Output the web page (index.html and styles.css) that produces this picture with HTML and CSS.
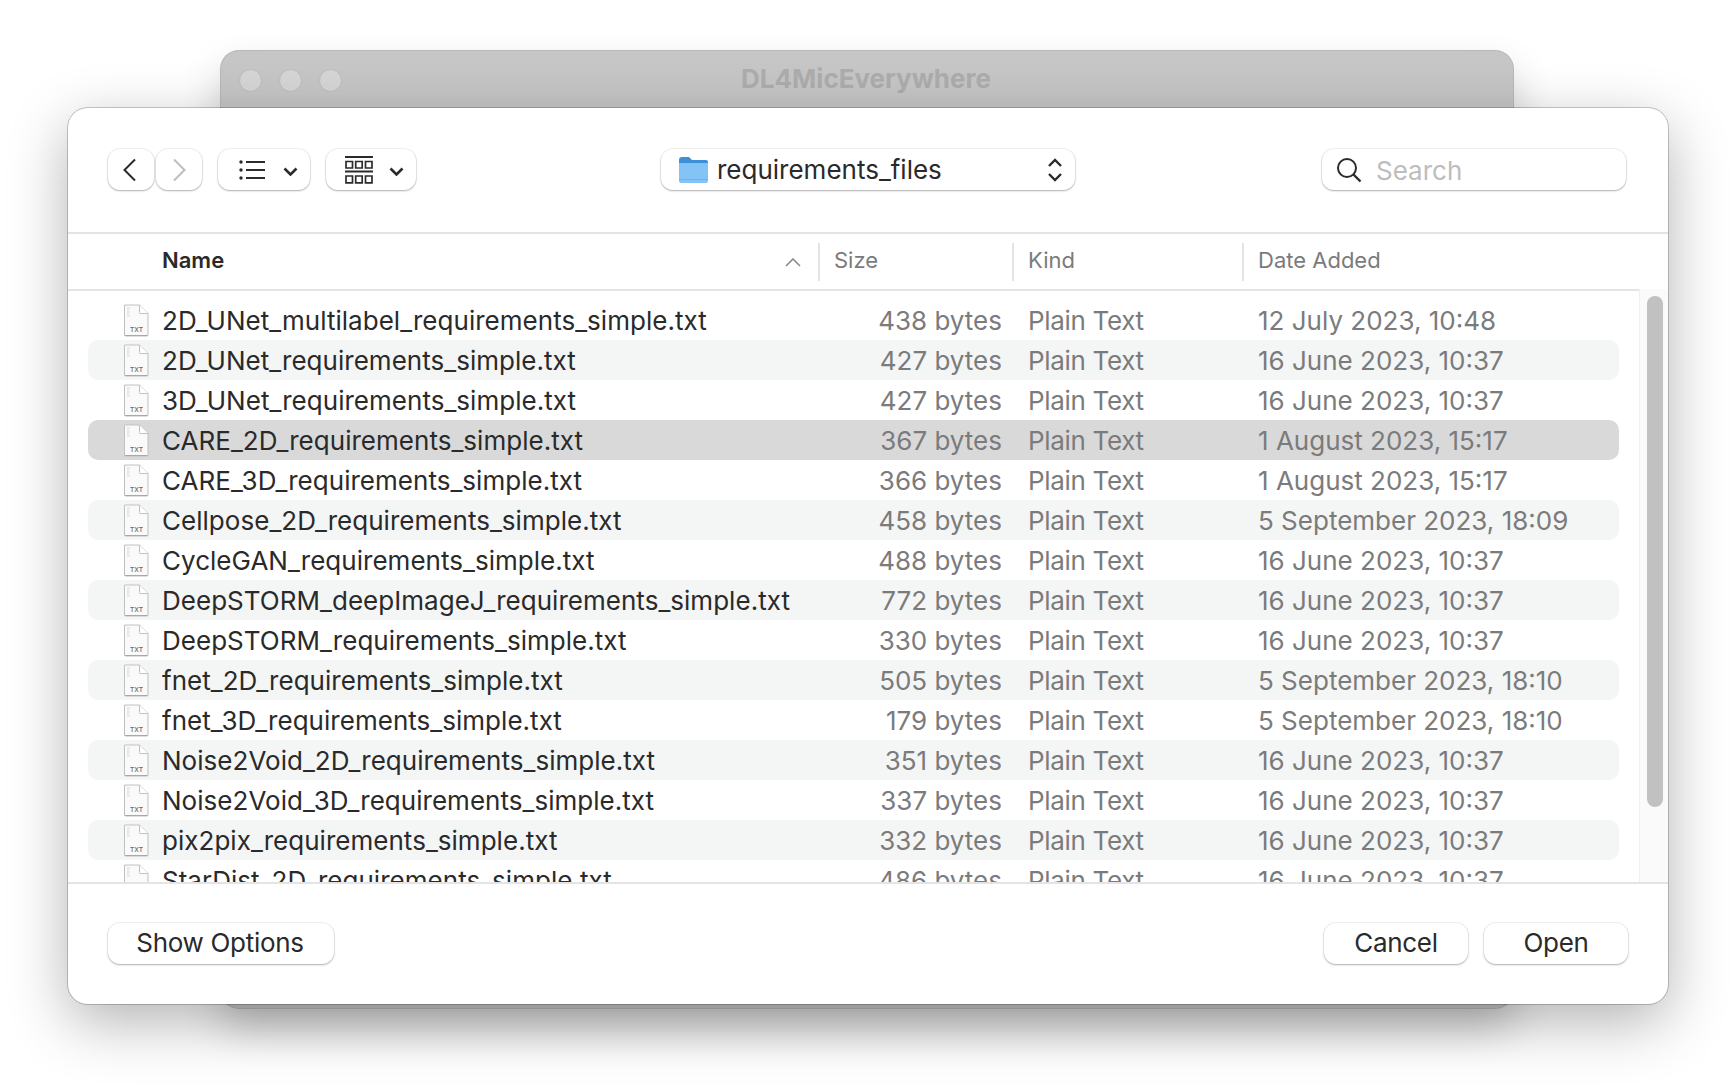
FILE: index.html
```html
<!DOCTYPE html>
<html lang="en">
<head>
    <meta charset="UTF-8">
    <title>requirements_files</title>
    <link rel="stylesheet" href="styles.css">
</head>
<body>
    <svg class="defs">
        <symbol id="txt" viewBox="0 0 26 33">
            <path d="M1.500 1h15L25 9.500v21.500a1 1 0 0 1-1 1H2.500a1 1 0 0 1-1-1z" fill="#fafafa" stroke="#c0c0c0"/>
            <path d="M16.500 1v7.500a1 1 0 0 0 1 1H25" fill="#fff" stroke="#c0c0c0"/>
            <path d="M2 31.500h22.500" stroke="#a8a8a8"/>
            <path d="M4 4h3M4 6h2M4 8h3M4 10h2M4 12h3" stroke="#d8d8d8"/>
            <text x="13.500" y="28" class="txt-label">TXT</text>
        </symbol>
    </svg>

    <div class="back-window">
        <div class="titlebar">
            <div class="lights"><i></i><i></i><i></i></div>
            <div class="win-title">DL4MicEverywhere</div>
        </div>
    </div>

    <div class="dialog">
        <div class="toolbar">
            <div class="tool-group">
                <button class="btn nav prev">
                    <svg width="15" height="24" viewBox="0 0 15 24"><path d="M13 1.500 2.500 12 13 22.500" fill="none" stroke="#2b2b2b" stroke-width="2"/></svg>
                </button>
                <button class="btn nav next">
                    <svg width="15" height="24" viewBox="0 0 15 24"><path d="m2 1.500 10.500 10.500L2 22.500" fill="none" stroke="#bdbdbd" stroke-width="2"/></svg>
                </button>
                <button class="btn view list-view">
                    <svg width="26" height="20" viewBox="0 0 26 20"><path d="M7 2h19M7 10h19M7 18h19" stroke="#2b2b2b" stroke-width="1.800"/><circle cx="2" cy="2" r="1.700" fill="#2b2b2b"/><circle cx="2" cy="10" r="1.700" fill="#2b2b2b"/><circle cx="2" cy="18" r="1.700" fill="#2b2b2b"/></svg>
                    <svg class="chev" width="15" height="9" viewBox="0 0 15 9"><path d="m1.500 1.500 6 6 6-6" fill="none" stroke="#2b2b2b" stroke-width="2.600"/></svg>
                </button>
                <button class="btn view gallery-view">
                    <svg width="28" height="28" viewBox="0 0 28 28" fill="none" stroke="#2b2b2b"><path d="M0 1h28M0 15.500h28" stroke-width="1.800"/><path d="M1 5.500h6.500v6.500H1zM10.700 5.500h6.500v6.500h-6.500zM20.500 5.500H27v6.500h-6.500zM1 20h6.500v6.800H1zM10.700 20h6.500v6.800h-6.500zM20.500 20H27v6.800h-6.500z" stroke-width="1.700"/></svg>
                    <svg class="chev" width="15" height="9" viewBox="0 0 15 9"><path d="m1.500 1.500 6 6 6-6" fill="none" stroke="#2b2b2b" stroke-width="2.600"/></svg>
                </button>
            </div>
            <div class="btn path">
                <svg class="folder" width="29" height="28" viewBox="0 0 29 28">
                    <path d="M0 4a3 3 0 0 1 3-3h7l3 3h14a2 2 0 0 1 2 2v6H0z" fill="#3d8fd6"/>
                    <path d="M0 7h29v18a2 2 0 0 1-2 2H2a2 2 0 0 1-2-2z" fill="#84c3f5"/>
                    <path d="M0 23.500h29" stroke="#6fb0e6"/>
                </svg>
                <span class="path-name">requirements_files</span>
                <svg width="16" height="24" viewBox="0 0 16 24"><path d="m2 8 6-6 6 6M2 16l6 6 6-6" fill="none" stroke="#2b2b2b" stroke-width="2.400"/></svg>
            </div>
            <div class="btn search">
                <svg class="search-icon" width="26" height="26" viewBox="0 0 26 26"><circle cx="11" cy="11" r="9" fill="none" stroke="#2b2b2b" stroke-width="2"/><path d="m17.500 17.500 7 7" stroke="#2b2b2b" stroke-width="2.400"/></svg>
                <span class="search-text">Search</span>
            </div>
        </div>

        <div class="list-head">
            <div class="col-name">Name
                <svg class="sort" width="16" height="9" viewBox="0 0 16 9"><path d="m1 8 7-7 7 7" fill="none" stroke="#8a8a8a" stroke-width="1.600"/></svg>
            </div>
            <div class="col-size">Size</div>
            <div class="col-kind">Kind</div>
            <div class="col-date">Date Added</div>
        </div>

        <div class="browser">
            <div class="files">
                <div class="row"><svg class="file-icon"><use href="#txt"/></svg><span class="name">2D_UNet_multilabel_requirements_simple.txt</span><span class="size">438 bytes</span><span class="kind">Plain Text</span><span class="date">12 July 2023, 10:48</span></div>
                <div class="row"><svg class="file-icon"><use href="#txt"/></svg><span class="name">2D_UNet_requirements_simple.txt</span><span class="size">427 bytes</span><span class="kind">Plain Text</span><span class="date">16 June 2023, 10:37</span></div>
                <div class="row"><svg class="file-icon"><use href="#txt"/></svg><span class="name">3D_UNet_requirements_simple.txt</span><span class="size">427 bytes</span><span class="kind">Plain Text</span><span class="date">16 June 2023, 10:37</span></div>
                <div class="row selected"><svg class="file-icon"><use href="#txt"/></svg><span class="name">CARE_2D_requirements_simple.txt</span><span class="size">367 bytes</span><span class="kind">Plain Text</span><span class="date">1 August 2023, 15:17</span></div>
                <div class="row"><svg class="file-icon"><use href="#txt"/></svg><span class="name">CARE_3D_requirements_simple.txt</span><span class="size">366 bytes</span><span class="kind">Plain Text</span><span class="date">1 August 2023, 15:17</span></div>
                <div class="row"><svg class="file-icon"><use href="#txt"/></svg><span class="name">Cellpose_2D_requirements_simple.txt</span><span class="size">458 bytes</span><span class="kind">Plain Text</span><span class="date">5 September 2023, 18:09</span></div>
                <div class="row"><svg class="file-icon"><use href="#txt"/></svg><span class="name">CycleGAN_requirements_simple.txt</span><span class="size">488 bytes</span><span class="kind">Plain Text</span><span class="date">16 June 2023, 10:37</span></div>
                <div class="row"><svg class="file-icon"><use href="#txt"/></svg><span class="name">DeepSTORM_deepImageJ_requirements_simple.txt</span><span class="size">772 bytes</span><span class="kind">Plain Text</span><span class="date">16 June 2023, 10:37</span></div>
                <div class="row"><svg class="file-icon"><use href="#txt"/></svg><span class="name">DeepSTORM_requirements_simple.txt</span><span class="size">330 bytes</span><span class="kind">Plain Text</span><span class="date">16 June 2023, 10:37</span></div>
                <div class="row"><svg class="file-icon"><use href="#txt"/></svg><span class="name">fnet_2D_requirements_simple.txt</span><span class="size">505 bytes</span><span class="kind">Plain Text</span><span class="date">5 September 2023, 18:10</span></div>
                <div class="row"><svg class="file-icon"><use href="#txt"/></svg><span class="name">fnet_3D_requirements_simple.txt</span><span class="size">179 bytes</span><span class="kind">Plain Text</span><span class="date">5 September 2023, 18:10</span></div>
                <div class="row"><svg class="file-icon"><use href="#txt"/></svg><span class="name">Noise2Void_2D_requirements_simple.txt</span><span class="size">351 bytes</span><span class="kind">Plain Text</span><span class="date">16 June 2023, 10:37</span></div>
                <div class="row"><svg class="file-icon"><use href="#txt"/></svg><span class="name">Noise2Void_3D_requirements_simple.txt</span><span class="size">337 bytes</span><span class="kind">Plain Text</span><span class="date">16 June 2023, 10:37</span></div>
                <div class="row"><svg class="file-icon"><use href="#txt"/></svg><span class="name">pix2pix_requirements_simple.txt</span><span class="size">332 bytes</span><span class="kind">Plain Text</span><span class="date">16 June 2023, 10:37</span></div>
                <div class="row"><svg class="file-icon"><use href="#txt"/></svg><span class="name">StarDist_2D_requirements_simple.txt</span><span class="size">486 bytes</span><span class="kind">Plain Text</span><span class="date">16 June 2023, 10:37</span></div>
            </div>
            <div class="scrollbar"><div class="thumb"></div></div>
        </div>

        <div class="footer">
            <button class="btn foot-btn options">Show Options</button>
            <div class="foot-right">
                <button class="btn foot-btn action">Cancel</button>
                <button class="btn foot-btn action">Open</button>
            </div>
        </div>
    </div>
</body>
</html>
```

FILE: styles.css
```css
html, body {
    margin: 0;
    height: 100%;
}

body {
    position: relative;
    width: 1736px;
    height: 1092px;
    overflow: hidden;
    background-color: #fff;
    font-family: 'Inter', 'Liberation Sans', sans-serif;
    color: #2a2a2a;
}

.defs {
    display: none;
}

.txt-label {
    font-family: 'Inter', sans-serif;
    font-size: 6.5px;
    font-weight: 500;
    text-anchor: middle;
    fill: #666;
}

/* window behind the dialog */
.back-window {
    position: absolute;
    left: 221px;
    top: 51px;
    width: 1292px;
    height: 957px;
    border-radius: 18px;
    background-color: #c6c6c6;
    box-shadow: 0 0 0 1px #b8b8b8, 0 20px 40px rgba(0, 0, 0, 0.2);
}

.titlebar {
    position: relative;
    display: flex;
    justify-content: center;
    height: 55px;
    line-height: 55px;
    padding-right: 2px;
}

.lights {
    position: absolute;
    left: 18px;
    top: 18px;
    display: flex;
    gap: 17px;
}

.lights i {
    width: 21px;
    height: 21px;
    border: 1px solid #bcbcbc;
    border-radius: 50%;
    background-color: #d6d6d6;
}

.win-title {
    font-size: 26px;
    font-weight: 700;
    color: #adadad;
}

/* open dialog */
.dialog {
    position: absolute;
    left: 68px;
    top: 108px;
    width: 1600px;
    height: 896px;
    display: flex;
    flex-direction: column;
    overflow: hidden;
    border-radius: 20px;
    background-color: #fff;
    box-shadow: 0 0 0 1px rgba(0, 0, 0, 0.2), 0 18px 60px rgba(0, 0, 0, 0.3);
}

.toolbar {
    position: relative;
    flex: none;
    height: 124px;
    border-bottom: 2px solid #e4e4e4;
}

.btn {
    box-sizing: border-box;
    border: none;
    border-radius: 12px;
    background-color: #fff;
    box-shadow: 0 0 0 1px rgba(0, 0, 0, 0.05), 0 1px 2px rgba(0, 0, 0, 0.28);
    color: #2a2a2a;
    font-family: inherit;
}

.tool-group {
    position: absolute;
    left: 40px;
    top: 41px;
    display: flex;
}

.nav {
    width: 46px;
    height: 41px;
    display: flex;
    align-items: center;
    justify-content: center;
    padding: 0;
}

.prev {
    padding-right: 3px;
}

.next {
    margin-left: 2px;
}

.view {
    height: 41px;
    display: flex;
    align-items: center;
    padding: 0;
}

.chev {
    margin-top: 3px;
}

.list-view {
    width: 92px;
    margin-left: 16px;
    padding-left: 21px;
    gap: 18px;
}

.gallery-view {
    width: 90px;
    margin-left: 16px;
    padding-left: 19px;
    gap: 16px;
}

.path {
    position: absolute;
    left: 593px;
    top: 41px;
    width: 414px;
    height: 41px;
    display: flex;
    align-items: center;
    padding: 0 12px 0 18px;
}

.folder {
    flex: none;
}

.path-name {
    flex: 1;
    margin-left: 9px;
    font-size: 26px;
}

.search {
    position: absolute;
    left: 1254px;
    top: 41px;
    width: 304px;
    height: 41px;
    display: flex;
    align-items: center;
    padding-left: 14px;
    gap: 14px;
}

.search-icon {
    margin-top: 1px;
}

.search-text {
    margin-top: 2px;
    font-size: 26px;
    color: #bdbdbd;
}

/* column headers */
.list-head {
    flex: none;
    height: 55px;
    display: flex;
    align-items: center;
    font-size: 22px;
    color: #7b7b7b;
}

.col-name {
    width: 750px;
    box-sizing: border-box;
    padding: 0 17px 4px 94px;
    display: flex;
    align-items: center;
    justify-content: space-between;
    font-weight: 600;
    color: #2a2a2a;
}

.sort {
    margin-top: 5px;
}

.col-size, .col-kind, .col-date {
    height: 38px;
    line-height: 34px;
    box-sizing: border-box;
    padding-left: 14px;
    border-left: 2px solid #e4e4e4;
}

.col-size {
    width: 194px;
}

.col-kind {
    width: 230px;
}

.col-date {
    flex: 1;
}

/* file list */
.browser {
    flex: 1;
    min-height: 0;
    display: flex;
}

.files {
    flex: 1;
    overflow: hidden;
    padding: 9px 20px 0;
    border-top: 2px solid #e4e4e4;
}

.row {
    height: 40px;
    display: grid;
    grid-template-columns: 74px 640px 200px 230px 1fr;
    align-items: center;
    border-radius: 10px;
    font-size: 26px;
}

.row:nth-child(even) {
    background-color: #f4f5f5;
}

.row.selected {
    background-color: #d9d9d9;
}

.file-icon {
    width: 26px;
    height: 33px;
    margin-left: 35px;
}

.name {
    letter-spacing: 0.03px;
}

.size {
    text-align: right;
    color: #7b7b7b;
}

.kind {
    padding-left: 26px;
    letter-spacing: -0.33px;
    color: #7b7b7b;
}

.date {
    padding-left: 26px;
    color: #7b7b7b;
}

.scrollbar {
    flex: none;
    width: 29px;
    padding-top: 7px;
    box-sizing: border-box;
    border-left: 1px solid #efefef;
    background-color: #fafafa;
}

.thumb {
    width: 16px;
    height: 511px;
    margin-left: 7px;
    border-radius: 8px;
    background-color: #c1c1c1;
}

/* bottom buttons */
.footer {
    flex: none;
    height: 122px;
    box-sizing: border-box;
    padding: 39px 40px 0;
    display: flex;
    justify-content: space-between;
    align-items: flex-start;
    border-top: 2px solid #e4e4e4;
}

.foot-right {
    display: flex;
    gap: 16px;
}

.foot-btn {
    height: 41px;
    padding: 0 0 2px;
    font-size: 26px;
    letter-spacing: -0.3px;
}

.options {
    width: 226px;
    padding-right: 2px;
}

.action {
    width: 144px;
}
```
